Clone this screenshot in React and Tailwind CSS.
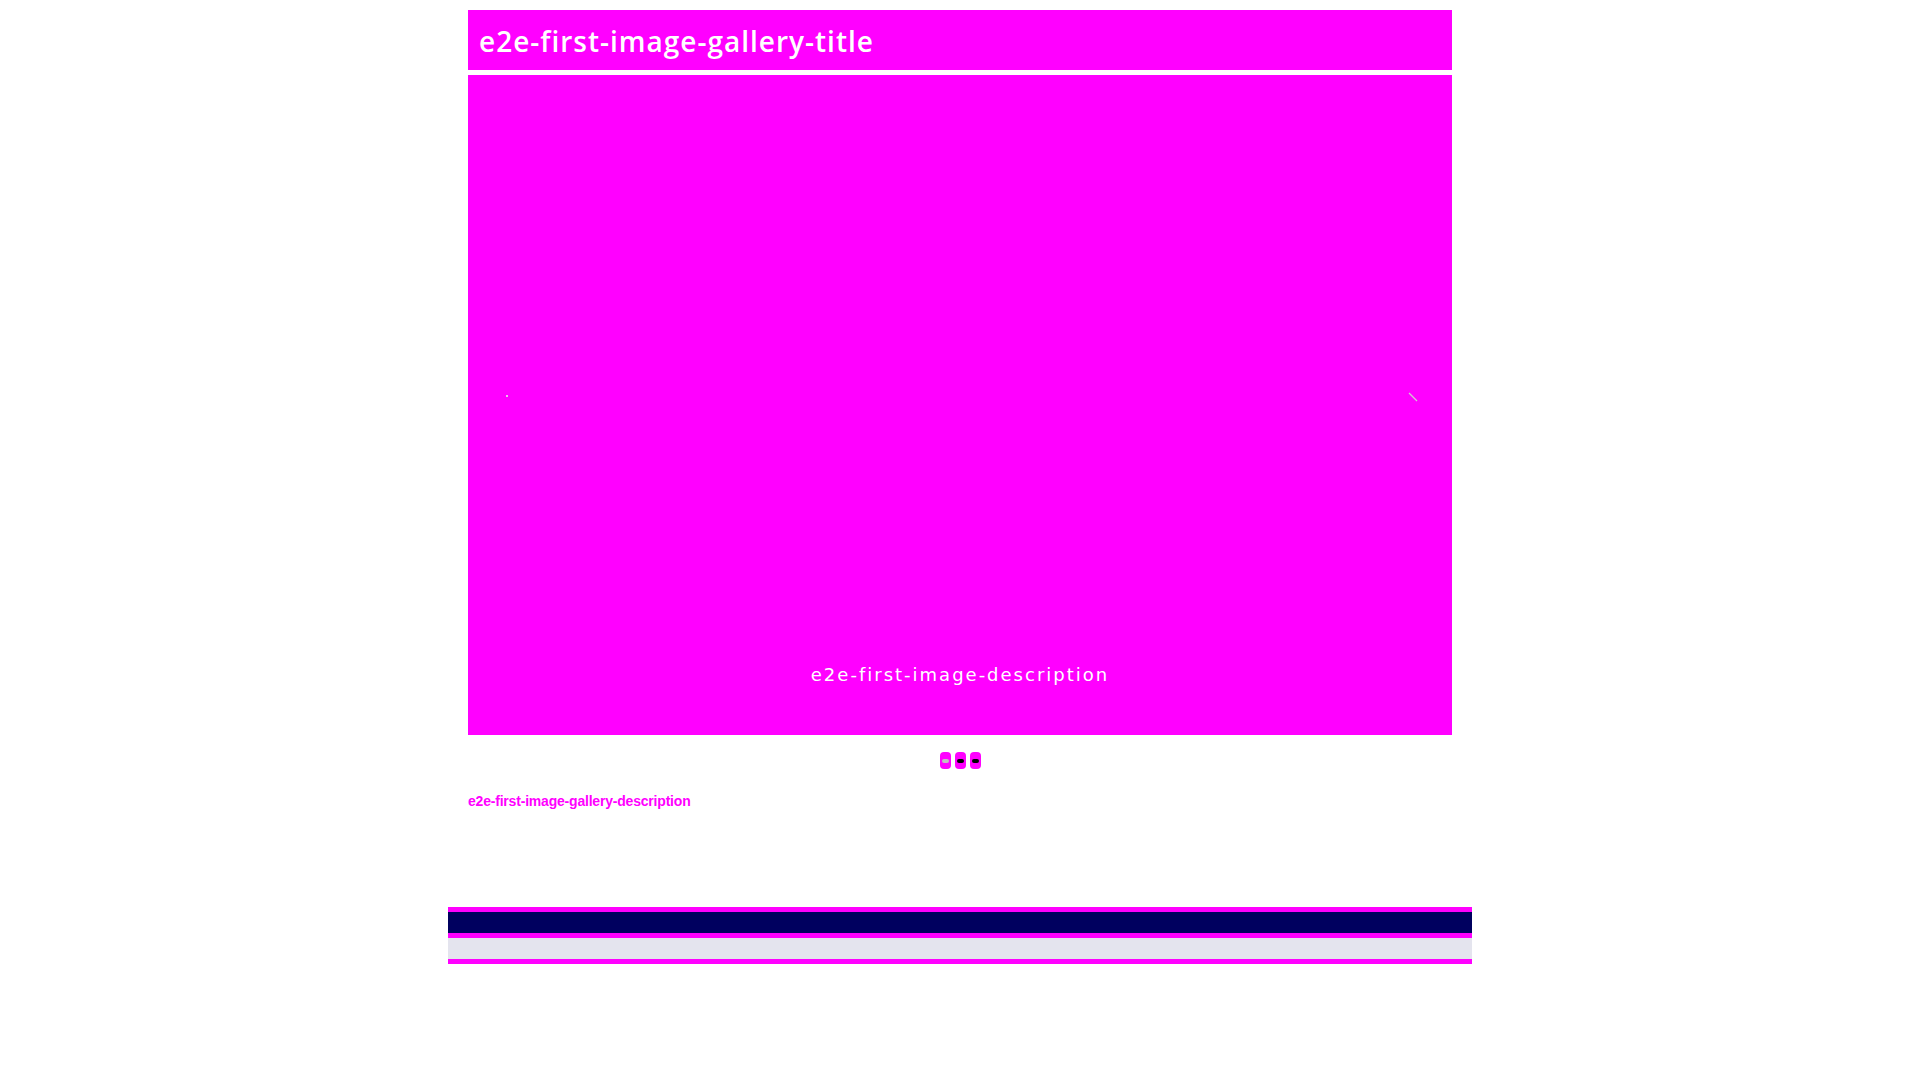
import React from "react";

export default function App() {
  return (
    <div className="min-h-screen bg-white flex flex-col items-center pt-[10px]" style={{ fontFamily: '"Open Sans", sans-serif' }}>
      <div className="w-[984px] flex flex-col">
        <div className="h-[60px] bg-[#ff00ff] flex items-center pl-[11px] pt-[1px]">
          <h1 className="text-white text-[28px] leading-none font-semibold tracking-[1px]" style={{ fontFamily: '"Open Sans", sans-serif' }}>e2e-first-image-gallery-title</h1>
        </div>
        <div className="mt-[5px] h-[660px] bg-[#ff00ff] relative flex flex-col justify-end items-center pb-[51px]">
          <svg className="absolute top-[319px] left-[37px]" width="4" height="4" viewBox="0 0 4 4">
            <rect x="1" y="1" width="2" height="2" fill="#e5c7e5" />
          </svg>
          <svg className="absolute top-[317px] right-[34px]" width="10" height="10" viewBox="0 0 10 10">
            <line x1="1" y1="1" x2="9" y2="9" stroke="#d0c8d0" strokeWidth="1.2" />
          </svg>
          <p className="text-white text-[18px] leading-none tracking-[2px]" style={{ fontFamily: '"DejaVu Sans", sans-serif' }}>e2e-first-image-description</p>
        </div>
        <div className="flex justify-center gap-[4px] mt-[17px] h-[17px]">
          {[0, 1, 2].map((i) => (
            <div key={i} className="w-[11px] h-[17px] rounded-[4px] bg-[#ff00ff] flex items-center justify-center">
              <div className={`w-[7px] h-[4px] rounded-full ${i === 0 ? "bg-[#c0c0c0]" : "bg-black"}`} />
            </div>
          ))}
        </div>
        <p className="mt-[23px] text-[#ff00ff] text-[14px] font-bold leading-[18px] tracking-[-0.2px]" style={{ fontFamily: '"Liberation Sans", Arial, sans-serif' }}>
          e2e-first-image-gallery-description
        </p>
      </div>
      <div className="mt-[97px] w-[1024px] flex flex-col">
        <div className="h-[5px] bg-[#ff00ff]" />
        <div className="h-[21px] bg-[#00005f]" />
        <div className="h-[5px] bg-[#ff00ff]" />
        <div className="h-[21px] bg-[#e4e4ee]" />
        <div className="h-[5px] bg-[#ff00ff]" />
      </div>
    </div>
  );
}
